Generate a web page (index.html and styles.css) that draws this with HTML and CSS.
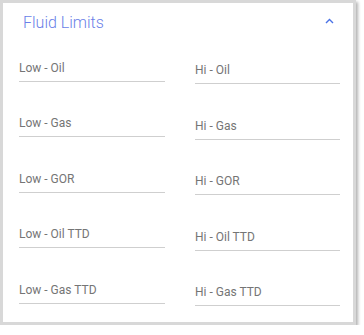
FILE: index.html
```html
<!DOCTYPE html>
<html lang="en">
<head>
    <meta charset="UTF-8">
    <meta name="viewport" content="width=device-width, initial-scale=1.0">
    <title>Fluid Limits</title>
    <link rel="stylesheet" href="styles.css">
</head>
<body>
    <!-- Panel de límites -->
    <section class="panel">
        <div class="panel-header">
            <h2 class="panel-title">Fluid Limits</h2>
            <svg class="chevron" width="9" height="6" viewBox="0 0 9 6">
                <polyline points="1,5 4.5,1.5 8,5" fill="none" stroke="#4a72e6" stroke-width="1.4"/>
            </svg>
        </div>

        <div class="fields">
            <div class="field"><label>Low - Oil</label></div>
            <div class="field hi"><label>Hi - Oil</label></div>
            <div class="field"><label>Low - Gas</label></div>
            <div class="field hi"><label>Hi - Gas</label></div>
            <div class="field"><label>Low - GOR</label></div>
            <div class="field hi"><label>Hi - GOR</label></div>
            <div class="field"><label>Low - Oil TTD</label></div>
            <div class="field hi"><label>Hi - Oil TTD</label></div>
            <div class="field"><label>Low - Gas TTD</label></div>
            <div class="field hi"><label>Hi - Gas TTD</label></div>
        </div>
    </section>
</body>
</html>
```

FILE: styles.css
```css
body {
    margin: 0;
    background-color: #fff;
    font-family: 'Roboto', sans-serif;
}

.panel {
    width: 356px;
    box-sizing: border-box;
    border: 3px solid #d8d8d8;
    box-shadow: 2px 2px 3px rgba(0, 0, 0, 0.3);
    background-color: #fff;
    padding-bottom: 18px;
}

.panel-header {
    display: flex;
    justify-content: space-between;
    align-items: center;
    padding: 9px 19px 0 20px;
    height: 31px;
    box-sizing: border-box;
}

.panel-title {
    margin: 0;
    font-size: 16px;
    font-weight: 300;
    line-height: 20px;
    color: #6a7fe8;
}

.chevron {
    display: block;
    margin-top: -4px;
}

.fields {
    display: grid;
    grid-template-columns: 146px 145px;
    column-gap: 30px;
    row-gap: 33.5px;
    padding: 0 13px 0 16px;
    margin-top: 25.5px;
}

.field {
    border-bottom: 1px solid #cfcfcf;
    padding-bottom: 5px;
}

.field.hi {
    position: relative;
    top: 2.5px;
}

.field label {
    display: block;
    font-size: 12px;
    line-height: 16px;
    color: #757575;
}
```
